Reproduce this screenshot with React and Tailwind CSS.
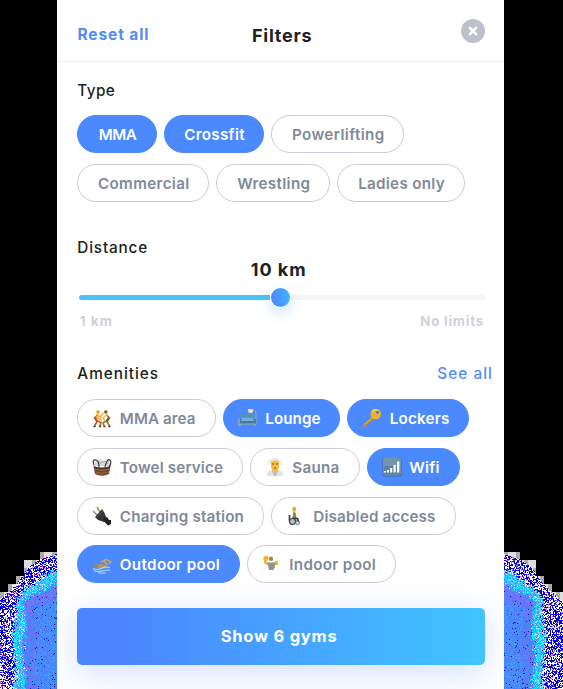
import React, { useLayoutEffect, useRef, useState } from "react";

const FONT = "font-['Inter','Open_Sans',sans-serif]";

// Text tracked out or in so that it spans the given width.
function Label({ children, width, className = "" }) {
  const ref = useRef(null);
  const [spacing, setSpacing] = useState(0);
  useLayoutEffect(() => {
    const el = ref.current;
    const before = el.style.letterSpacing;
    el.style.letterSpacing = "0px";
    const natural = el.getBoundingClientRect().width;
    el.style.letterSpacing = before;
    setSpacing((width + 0.8 - natural) / children.length);
  }, [children, width]);
  return (
    <span
      ref={ref}
      className={`block shrink-0 whitespace-nowrap ${className}`}
      style={{ letterSpacing: `${spacing}px` }}
    >
      {children}
    </span>
  );
}

const icons = {
  wrestle: (
    <g strokeLinecap="round" strokeLinejoin="round" fill="none">
      <path d="M5.500 7 2.500 10l2.500 3.500L2.500 18M5 13l4 1.500-1 3.500" stroke="#b96a1c" strokeWidth="1.700" />
      <path d="M5 6.500 8.500 9 11 5.500M5 9l4 3" stroke="#ffae35" strokeWidth="1.700" />
      <path d="M14.500 7l3 3-2.500 3.500 2.500 4.500M15 13l-4 1.500 1 3.500" stroke="#a8752c" strokeWidth="1.700" />
      <path d="M14.500 7 11 10l1.500 2" stroke="#f7b549" strokeWidth="1.600" />
      <path d="m3.500 10 1.500 3" stroke="#d4442f" strokeWidth="1.800" />
      <path d="m16.500 10-1.500 3" stroke="#416d3b" strokeWidth="2" />
      <path d="M2 18.500h1M7.500 18.500h1M12 18.500h1M17 18.500h1" stroke="#403a35" strokeWidth="1.300" />
      <circle cx="6" cy="4" r="1.800" fill="#e79a2c" />
      <circle cx="13.800" cy="4" r="1.800" fill="#776029" />
    </g>
  ),
  lounge: (
    <g>
      <path d="M13 3q5-3 5 3v11" stroke="#98a8b3" strokeWidth="1" fill="none" />
      <path d="m10 1 5 .5-.5 3.500-4-.5z" fill="#f9e5c6" />
      <path d="M3 8q0-2 2-2h10q2 0 2 2v8H3z" fill="#5793bd" />
      <path d="M2 11h16v5H2z" fill="#3e7ba8" />
      <path d="M4 10h11l1 3H3z" fill="#75b1d6" />
      <path d="M1 10v8M2 16h15v2M1 17h2" stroke="#aaa7a0" strokeWidth="1.200" fill="none" />
    </g>
  ),
  key: (
    <g>
      <path d="M10.500 8.500 1 17v2l3-.3.500-2 2-.3.500-2 2-.4 4-4z" fill="#c58a2b" />
      <circle cx="13.800" cy="6" r="5.300" fill="#edaf2c" />
      <path d="M10 3.500q3-3.500 7-.5" stroke="#ffd75d" strokeWidth="1.300" fill="none" />
      <circle cx="15.500" cy="4.300" r="1.500" fill="#4b77bd" />
      <path d="M10.500 9 3 16.500" stroke="#f3c34c" strokeWidth="1" />
    </g>
  ),
  basket: (
    <g>
      <path d="M2 9 4 3l5-1 3 2 5-1 2 6z" fill="#d7dad8" />
      <path d="m5 5 4 1 4-2 3 3" stroke="#9ca5a5" fill="none" />
      <path d="M1.500 9q8 3 17 0l-1.500 8q-7 3.500-14 0z" fill="#6f432b" />
      <path d="M3 12q7 3 14 0M3 15q7 3 14 0" stroke="#a8724a" strokeWidth=".9" fill="none" />
      <path d="M6 11v7M10 12v7M14 11v7" stroke="#8f5d3a" strokeWidth=".6" fill="none" />
      <path d="M2 10q8 3 16 0M2 8Q0 2 4 3q3 1 3 7M13 10Q15 1 18 3q2 3-1 7" stroke="#3f332c" strokeWidth="1.200" fill="none" />
    </g>
  ),
  sauna: (
    <g>
      <path d="M5 7q-1-6 5-6t5 6z" fill="#e2e7e5" />
      <path d="M2 19q0-6 5-6h6q5 0 5 6z" fill="#dbe4e8" />
      <path d="M6 5q4-3 8 0v5q-1 4-4 4t-4-4z" fill="#f8bd38" />
      <path d="M8 12h4l-2 7z" fill="#ffb82c" />
      <path d="M7 7h2M11 7h2M9 11h2" stroke="#785326" strokeWidth="1" />
      <path d="m7 13 3 6 3-6" stroke="#a4b4bc" fill="none" />
      <path d="M5 3q-3 2-1 5M15 3q3 2 1 5" stroke="#e9f0ee" strokeWidth="2" fill="none" />
    </g>
  ),
  wifi: (
    <g>
      <rect x=".5" y="1" width="19" height="18.500" rx="2.500" fill="#416c94" />
      <rect x="1" y="1" width="18" height="17.500" rx="2" fill="#7194b0" />
      <path d="M2 9h16v8.500H2z" fill="#5a83a4" />
      <path d="M2 14h2v1.500H2zM5 13h2v2.500H5zM8 11h2.200v4.500H8zM11.500 8h2.200v7.500h-2.200zM15 4.500h2.300v11H15z" fill="#fff" />
    </g>
  ),
  plug: (
    <g>
      <path d="M5 2 9 7M1 5l5 5" stroke="#9f9272" strokeWidth="1.500" />
      <path d="m5 1 2 2" stroke="#d3a83b" strokeWidth="1.500" />
      <path d="m3 11 7-8 2 3 3 7-3 3-6-2z" fill="#333536" />
      <path d="m11 13 4-2 2 3h2v4l-3 1.500-4-4z" fill="#202223" />
      <path d="m5 11 6-6" stroke="#65696a" strokeWidth=".8" />
    </g>
  ),
  wheelchair: (
    <g fill="none">
      <rect x="6.500" y="1" width="3.500" height="4" rx="1.300" fill="#e5aa2b" />
      <path d="M8.200 4.500v3" stroke="#e5b72b" strokeWidth="1.800" />
      <path d="M7 6.500h2.500l1 5.500H6.500z" fill="#8b8747" />
      <path d="M3.500 9v5.500h7" stroke="#353e47" strokeWidth="1.700" />
      <path d="M6 12.500h5.500l1.500 5" stroke="#2b323a" strokeWidth="1.700" />
      <circle cx="6.500" cy="15.500" r="3" fill="#b9bec2" stroke="#3a434c" strokeWidth="1.200" />
      <circle cx="11.500" cy="17" r="1.800" fill="#dfe2e4" stroke="#747b80" />
    </g>
  ),
  swim: (
    <g>
      <path d="m9 8 5-2.500 4.500 2L17 10M12 7l3 4" stroke="#d3a254" strokeWidth="1.600" fill="none" />
      <path d="M4 12q5-4 11 0l-2 2.500H5z" fill="#b9935d" />
      <circle cx="4" cy="11.500" r="2.300" fill="#8e8a70" />
      <path d="M1 14.500q4 2 8 0t9-1M2 17q5 1 8 0t8-1M6 19h8" stroke="#a7daf5" strokeWidth="1.200" fill="none" />
    </g>
  ),
  polo: (
    <g>
      <circle cx="3.800" cy="4.500" r="2.700" fill="#ffc33b" />
      <path d="m2 4.500 4-1" stroke="#df911e" />
      <circle cx="9" cy="4.800" r="2.200" fill="#a58a4c" />
      <path d="M3 6.500 3.500 9l4 1.500M10.500 9.500l3 .5 1-3" stroke="#e8a52d" strokeWidth="2" fill="none" />
      <path d="M5.500 8.500H13V13l-1.500 3H7z" fill="#8f9690" />
      <path d="m13 11 2-4 1.800 4z" fill="#f7b332" />
    </g>
  ),
};

function Icon({ name }) {
  return (
    <svg viewBox="0 0 20 20" className="h-5 w-5 shrink-0" aria-hidden="true">
      {icons[name]}
    </svg>
  );
}

const typeRows = [
  [
    { label: "MMA", text: 37, size: "w-[79.5px]", on: true },
    { label: "Crossfit", text: 60, size: "w-[100.5px]", on: true },
    { label: "Powerlifting", text: 92, size: "w-[133px]" },
  ],
  [
    { label: "Commercial", text: 91, size: "w-[132px]" },
    { label: "Wrestling", text: 72.5, size: "w-[114px]" },
    { label: "Ladies only", text: 86, size: "w-[127.5px]" },
  ],
];

const amenityRows = [
  [
    { label: "MMA area", text: 75, size: "w-[138.5px]", icon: "wrestle" },
    { label: "Lounge", text: 54.5, size: "w-[117.5px]", icon: "lounge", on: true },
    { label: "Lockers", text: 59, size: "w-[122px]", icon: "key", on: true },
  ],
  [
    { label: "Towel service", text: 102.5, size: "w-[165.5px]", icon: "basket" },
    { label: "Sauna", text: 46.5, size: "w-[110px]", icon: "sauna" },
    { label: "Wifi", text: 29.5, size: "w-[93.5px]", icon: "wifi", on: true },
  ],
  [
    { label: "Charging station", text: 123.5, size: "w-[186.5px]", icon: "plug" },
    { label: "Disabled access", text: 121.5, size: "w-[185px]", icon: "wheelchair" },
  ],
  [
    { label: "Outdoor pool", text: 99.5, size: "w-[162.5px]", icon: "swim", on: true },
    { label: "Indoor pool", text: 86, size: "w-[149px]", icon: "polo" },
  ],
];

function Chip({ label, text, size, icon, on }) {
  const tone = on
    ? "border-[#4b89ff] bg-[#4b89ff] text-white"
    : "border-[#c9ccd8] bg-white text-[#808997]";
  return (
    <button
      className={`flex h-[38px] shrink-0 items-center rounded-full border ${size} ${tone} ${
        icon ? "gap-[7.5px] pl-3.5" : "justify-center pl-[1px]"
      }`}
    >
      {icon && <Icon name={icon} />}
      <Label width={text} className="pt-[2px] text-[15.2px] leading-5 font-semibold">
        {label}
      </Label>
    </button>
  );
}

function ChipRows({ rows }) {
  return (
    <div className="flex flex-col gap-[10.8px]">
      {rows.map((row, i) => (
        <div key={i} className="flex gap-[7px]">
          {row.map((chip) => (
            <Chip key={chip.label} {...chip} />
          ))}
        </div>
      ))}
    </div>
  );
}

// Dithered glow at the foot of the side bars, built from single-pixel cells.
const edge = [[0, 554], [16, 559], [28, 568], [40, 585], [58, 601]];
const steps = [552, 552, 560, 560, 576, 584, 592, 592];

function edgeAt(u) {
  for (let i = 1; i < edge.length; i++) {
    if (u <= edge[i][0]) {
      const [a, ya] = edge[i - 1];
      const [b, yb] = edge[i];
      return ya + ((u - a) / (b - a)) * (yb - ya);
    }
  }
  return 601;
}

const palettes = [
  ["#ffffff", "#ffffff", "#ffffff", "#ffffff", "#ffffff", "#0a00ff", "#1400f0", "#0000b8", "#0000a0", "#8f7bff", "#0a00ff", "#0500d8"],
  ["#00f2ff", "#20d0ff", "#18f8ff", "#c8f4ff", "#2fb8ff", "#4aa4ff", "#5a8cff", "#20e0ff", "#4a90ff"],
  ["#6b6cff", "#7a78f4", "#5d6cff", "#6880f4", "#4f82ff", "#7a74ec"],
  ["#3d82ff", "#4a92ff", "#4a8cf5", "#4d9cff", "#4282ff", "#5a90ef", "#3c8df8"],
];

function glow(mirror) {
  let seed = mirror ? 7351 : 1927;
  const rnd = () => {
    seed = (seed * 1664525 + 1013904223) % 4294967296;
    return seed / 4294967296;
  };
  const paths = {};
  const put = (color, x, y) => {
    paths[color] = (paths[color] || "") + `M${x} ${y}h1v1h-1z`;
  };
  for (let x = 0; x < 59; x++) {
    const u = mirror ? x : Math.max(0, 55 - x);
    const top = edgeAt(u);
    const step = steps[Math.min(7, Math.floor(u / 8))];
    const right = mirror ? 54 : 56;
    for (let y = step; y < 689; y++) {
      if (y < top) {
        put(Math.floor(u / 4 + Math.floor(y / 8)) % 3 ? "#dedede" : "#aaaaaa", x, y - 540);
        continue;
      }
      const wave = Math.sin(y / 9 + u / 7) * 1.5;
      const base = Math.min((y - top) * 0.8, right - u);
      const d = base + wave + (rnd() - 0.5) * 5;
      const layer = d < 15 ? 0 : d < 25 ? 1 : d < 36 ? 2 : 3;
      const r = rnd();
      const p = palettes[layer];
      let color = p[Math.floor(rnd() * p.length)];
      if (layer === 0 && r < 0.025) color = "#ff35ff";
      if (layer > 1 && r < 0.025) color = "#1818b8";
      if (layer === 2 && y > 615 && r > 0.5) color = "#4486f4";
      if (layer === 3 && r > 0.9) color = "#5c70ff";
      put(color, x, y - 540);
    }
  }
  return Object.entries(paths);
}

const glows = [glow(false), glow(true)];

function SideBar({ side, className }) {
  return (
    <div className={`flex h-full shrink-0 items-end overflow-hidden bg-black ${className}`}>
      <svg width="59" height="149" shapeRendering="crispEdges" className="block shrink-0">
        {glows[side].map(([color, d]) => (
          <path key={color} d={d} fill={color} />
        ))}
      </svg>
    </div>
  );
}

export default function App() {
  return (
    <div className={`flex h-[689px] w-[563px] overflow-hidden bg-black antialiased ${FONT}`}>
      <SideBar side={0} className="w-[57px]" />
      <div className="flex w-[447px] shrink-0 flex-col overflow-hidden bg-white text-[#202124]">
        <header className="flex h-[62px] shrink-0 items-start border-b border-[#e9edf0] pt-[19px] pr-[19px] pl-5">
          <button className="flex h-8 w-[175px] items-start pt-[6px] pl-[0.5px] text-[#568bf5]">
            <Label width={71} className="text-[15.5px] leading-5 font-bold">Reset all</Label>
          </button>
          <h1 className="flex flex-1 pt-[5px]">
            <Label width={59.5} className="text-[18px] leading-6 font-bold">Filters</Label>
          </h1>
          <button className="flex size-6 items-center justify-center rounded-full bg-[#bbc0ca]" aria-label="Close">
            <svg viewBox="0 0 10 10" className="size-2.5">
              <path d="m1.200 1.200 7.600 7.600m0-7.600L1.200 8.800" stroke="white" strokeWidth="2.400" />
            </svg>
          </button>
        </header>

        <main className="flex flex-col pr-[19px] pl-[20.3px]">
          <section className="flex flex-col pt-[18.5px]">
            <h2 className="flex h-[34.5px]">
              <Label width={37} className="text-[15.3px] leading-5 font-medium">Type</Label>
            </h2>
            <ChipRows rows={typeRows} />
          </section>

          <section className="flex flex-col pt-[36.2px]">
            <h2 className="flex h-5">
              <Label width={70} className="text-[15.3px] leading-5 font-medium">Distance</Label>
            </h2>
            <div className="flex h-6 justify-center pr-[5px]">
              <Label width={55} className="text-[18px] leading-6 font-bold">10 km</Label>
            </div>
            <div className="mt-[12.6px] flex h-[6px] items-center pl-[1.5px]">
              <div className="h-[5px] w-[191.5px] shrink-0 rounded-l-sm bg-[#45c5fa]" />
              <div className="z-10 ml-[1px] size-[19px] shrink-0 rounded-full bg-gradient-to-r from-[#4b86ff] to-[#40b3ff] shadow-[0_0_0_1px_white,0_5px_12px_2px_rgba(75,137,255,0.2)]" />
              <div className="h-[5px] flex-1 rounded-r-sm bg-[#f3f5f8]" />
            </div>
            <div className="mt-[10.5px] flex h-5 justify-between pr-[1px] pl-[2.5px] text-[#cdd2da]">
              <Label width={32.5} className="text-[13.3px] leading-5 font-bold">1 km</Label>
              <Label width={63} className="text-[13.3px] leading-5 font-bold">No limits</Label>
            </div>
          </section>

          <section className="flex flex-col pt-[33.4px]">
            <div className="-mr-2 flex h-[34.5px] justify-between">
              <h2 className="flex">
                <Label width={81} className="text-[15.3px] leading-5 font-medium">Amenities</Label>
              </h2>
              <a className="flex text-[#568bf5]">
                <Label width={55} className="text-[15.3px] leading-5 font-medium">See all</Label>
              </a>
            </div>
            <ChipRows rows={amenityRows} />
          </section>

          <button className="mt-[24.7px] flex h-[57px] w-[407.5px] items-center justify-center rounded-[5px] bg-gradient-to-r from-[#4b84ff] from-10% to-[#40c5ff] pr-[4px] pb-[1px] text-white shadow-[0_8px_32px_rgba(75,125,255,0.24)]">
            <Label width={116} className="text-[16.5px] leading-6 font-bold">Show 6 gyms</Label>
          </button>
        </main>
      </div>
      <SideBar side={1} className="w-[59px]" />
    </div>
  );
}
